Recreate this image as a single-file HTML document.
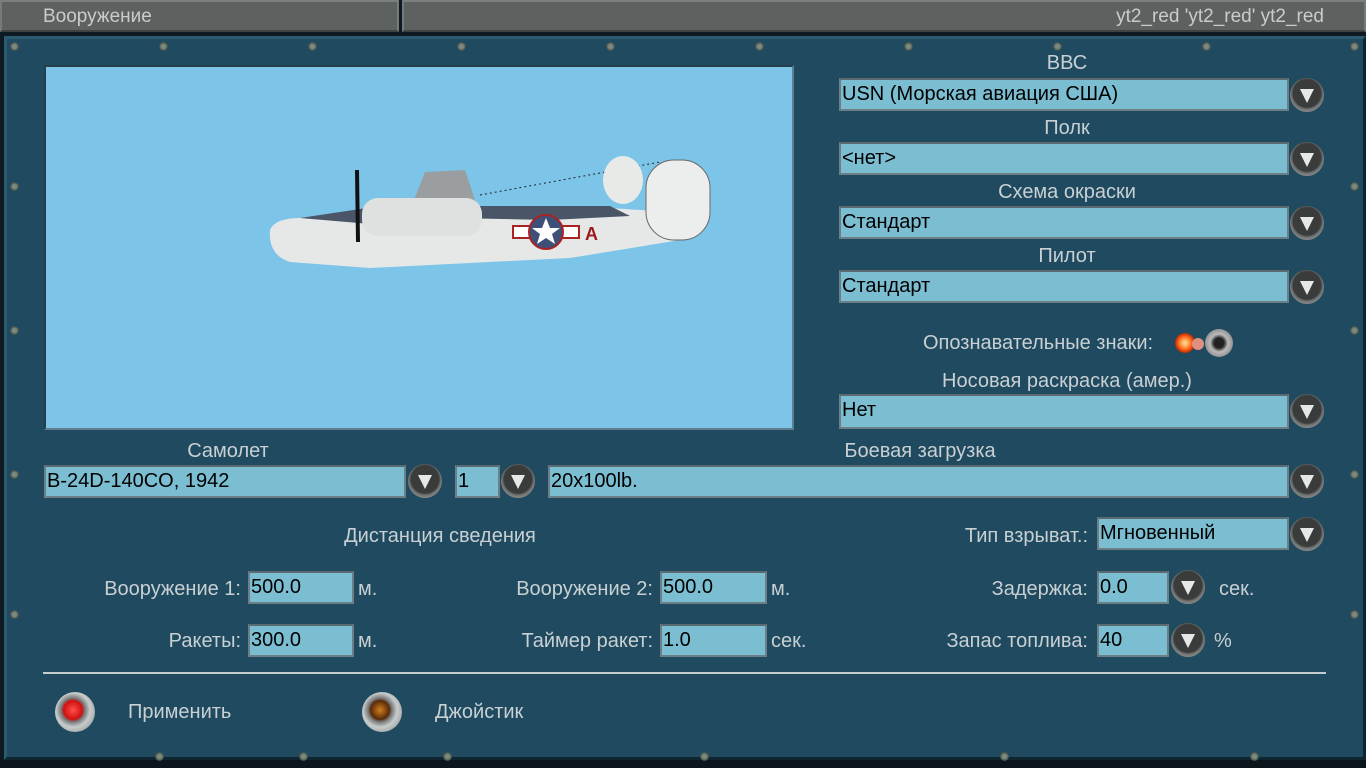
<!DOCTYPE html>
<html><head><meta charset="utf-8"><style>
*{margin:0;padding:0;box-sizing:border-box}
body{width:1366px;height:768px;overflow:hidden;background:#0d1a22;font-family:"Liberation Sans",sans-serif;position:relative}
.a{position:absolute}
.tab{position:absolute;top:0;height:32px;background:#5d615f;border:2px solid #767a78;border-top-color:#7b7f7d;border-bottom-color:#3e4240;color:#c9cccb;font-size:19px;line-height:29px}
.panel{position:absolute;left:4px;top:36px;width:1362px;height:724px;background:#1f4a5f;border:3px solid #2c5a70;border-right-color:#0f2630;border-bottom-color:#0f2630}
.f{position:absolute;background:#7bbdd1;border:2px solid #6d7f86;border-top-color:#5a6a70;color:#000;font-size:20px;line-height:28px;padding-left:1px;white-space:nowrap;overflow:hidden}
.l{position:absolute;color:#c8d0d3;font-size:20px;line-height:20px;white-space:nowrap}
.c{transform:translateX(-50%)}
.r{text-align:right}
.b{position:absolute;width:34px;height:34px;border-radius:50%;background:radial-gradient(circle at 50% 45%,#3a3c3c 55%,#6d706f 62%,#8a8d8c 75%,#4a4c4c 100%)}
.b:after{content:"";position:absolute;left:10px;top:11px;border-left:7px solid transparent;border-right:7px solid transparent;border-top:14px solid #e6e8e8}
.s{position:absolute;width:9px;height:9px;border-radius:50%;background:radial-gradient(circle,#7d8a80 30%,#2e3c34 80%)}
</style></head><body>
<div class="tab" style="left:0;width:399px;padding-left:41px">Вооружение</div>
<div class="tab" style="left:402px;width:964px;text-align:right;padding-right:40px">yt2_red 'yt2_red' yt2_red</div>
<div class="panel"></div>
<div class="a" style="left:0;top:760px;width:1366px;height:8px;background:#0b161c"></div>
<div class="s" style="left:10px;top:42px"></div><div class="s" style="left:159px;top:42px"></div><div class="s" style="left:308px;top:42px"></div><div class="s" style="left:457px;top:42px"></div><div class="s" style="left:606px;top:42px"></div><div class="s" style="left:755px;top:42px"></div><div class="s" style="left:904px;top:42px"></div><div class="s" style="left:1053px;top:42px"></div><div class="s" style="left:1202px;top:42px"></div><div class="s" style="left:1350px;top:42px"></div>
<div class="s" style="left:10px;top:182px"></div><div class="s" style="left:10px;top:326px"></div><div class="s" style="left:10px;top:470px"></div><div class="s" style="left:10px;top:610px"></div>
<div class="s" style="left:1350px;top:182px"></div><div class="s" style="left:1350px;top:326px"></div><div class="s" style="left:1350px;top:470px"></div><div class="s" style="left:1350px;top:610px"></div>
<div class="s" style="left:155px;top:752px"></div><div class="s" style="left:299px;top:752px"></div><div class="s" style="left:443px;top:752px"></div><div class="s" style="left:700px;top:752px"></div><div class="s" style="left:1000px;top:752px"></div><div class="s" style="left:1250px;top:752px"></div>
<div class="a" style="left:44px;top:65px;width:750px;height:365px;background:#7cc5e9;border:2px solid #263f4d;border-right-color:#5f7f8f;border-bottom-color:#5f7f8f"></div>
<svg class="a" style="left:250px;top:150px" width="480" height="130" viewBox="0 0 480 130">
<polygon points="160,60 175,22 215,20 230,65" fill="#9a9ea0"/>
<line x1="230" y1="45" x2="410" y2="12" stroke="#222" stroke-dasharray="2,3"/>
<path d="M20,80 Q25,68 50,68 L130,58 L360,58 L420,62 L430,90 L320,108 L120,118 L40,112 Q18,105 20,80Z" fill="#e6e8e8"/>
<path d="M50,68 L130,56 L360,56 L380,66 L300,70 L200,68 L120,74Z" fill="#4a5668"/>
<rect x="112" y="48" width="120" height="38" rx="16" fill="#dfe1e1"/>
<ellipse cx="373" cy="30" rx="20" ry="24" fill="#e8eae8"/>
<rect x="396" y="10" width="64" height="80" rx="28" fill="#eceeee" stroke="#666"/>
<line x1="107" y1="20" x2="108" y2="92" stroke="#111" stroke-width="4"/>
<rect x="263" y="76" width="66" height="12" fill="#fff" stroke="#a22" stroke-width="2"/>
<circle cx="296" cy="82" r="17" fill="#3e5078" stroke="#a22" stroke-width="2"/>
<polygon points="296,68 300,78 310,78 302,84 305,94 296,88 287,94 290,84 282,78 292,78" fill="#fff"/>
<text x="335" y="90" fill="#a01818" font-size="18" font-weight="bold" font-family="Liberation Sans">A</text>
</svg>
<div class="l c" style="left:1067px;top:53px">ВВС</div>
<div class="f" style="left:839px;top:78px;width:450px;height:33px">USN (Морская авиация США)</div><div class="b" style="left:1290px;top:78px"></div>
<div class="l c" style="left:1067px;top:118px">Полк</div>
<div class="f" style="left:839px;top:142px;width:450px;height:33px">&lt;нет&gt;</div><div class="b" style="left:1290px;top:142px"></div>
<div class="l c" style="left:1067px;top:182px">Схема окраски</div>
<div class="f" style="left:839px;top:206px;width:450px;height:33px">Стандарт</div><div class="b" style="left:1290px;top:206px"></div>
<div class="l c" style="left:1067px;top:246px">Пилот</div>
<div class="f" style="left:839px;top:270px;width:450px;height:33px">Стандарт</div><div class="b" style="left:1290px;top:270px"></div>
<div class="l" style="left:923px;top:333px">Опознавательные знаки:</div>
<div class="a" style="left:1175px;top:333px;width:20px;height:20px;border-radius:50%;background:radial-gradient(circle,#ffd080 10%,#ff6a20 45%,#c02800 70%,transparent 72%)"></div>
<div class="a" style="left:1192px;top:338px;width:12px;height:12px;border-radius:50%;background:#e09080"></div>
<div class="a" style="left:1205px;top:329px;width:28px;height:28px;border-radius:50%;background:radial-gradient(circle,#222 25%,#bbb 45%,#777 90%)"></div>
<div class="l c" style="left:1067px;top:371px">Носовая раскраска (амер.)</div>
<div class="f" style="left:839px;top:394px;width:450px;height:35px">Нет</div><div class="b" style="left:1290px;top:394px"></div>
<div class="l c" style="left:228px;top:441px">Самолет</div>
<div class="l c" style="left:920px;top:441px">Боевая загрузка</div>
<div class="f" style="left:44px;top:465px;width:362px;height:33px">B-24D-140CO, 1942</div><div class="b" style="left:408px;top:464px"></div>
<div class="f" style="left:455px;top:465px;width:45px;height:33px">1</div><div class="b" style="left:501px;top:464px"></div>
<div class="f" style="left:548px;top:465px;width:741px;height:33px">20x100lb.</div><div class="b" style="left:1290px;top:464px"></div>
<div class="l c" style="left:440px;top:526px">Дистанция сведения</div>
<div class="l r" style="left:858px;width:230px;top:526px">Тип взрыват.:</div>
<div class="f" style="left:1097px;top:517px;width:192px;height:33px">Мгновенный</div><div class="b" style="left:1290px;top:517px"></div>
<div class="l r" style="left:10px;width:231px;top:579px">Вооружение 1:</div>
<div class="f" style="left:248px;top:571px;width:106px;height:33px">500.0</div><div class="l" style="left:358px;top:579px">м.</div>
<div class="l r" style="left:423px;width:230px;top:579px">Вооружение 2:</div>
<div class="f" style="left:660px;top:571px;width:107px;height:33px">500.0</div><div class="l" style="left:771px;top:579px">м.</div>
<div class="l r" style="left:858px;width:230px;top:579px">Задержка:</div>
<div class="f" style="left:1097px;top:571px;width:72px;height:33px">0.0</div><div class="b" style="left:1171px;top:570px"></div><div class="l" style="left:1219px;top:579px">сек.</div>
<div class="l r" style="left:10px;width:231px;top:631px">Ракеты:</div>
<div class="f" style="left:248px;top:624px;width:106px;height:33px">300.0</div><div class="l" style="left:358px;top:631px">м.</div>
<div class="l r" style="left:423px;width:230px;top:631px">Таймер ракет:</div>
<div class="f" style="left:660px;top:624px;width:107px;height:33px">1.0</div><div class="l" style="left:771px;top:631px">сек.</div>
<div class="l r" style="left:858px;width:230px;top:631px">Запас топлива:</div>
<div class="f" style="left:1097px;top:624px;width:72px;height:33px">40</div><div class="b" style="left:1171px;top:623px"></div><div class="l" style="left:1214px;top:631px">%</div>
<div class="a" style="left:43px;top:672px;width:1283px;height:2px;background:#c4ccce"></div>
<div class="a" style="left:55px;top:692px;width:40px;height:40px;border-radius:50%;background:radial-gradient(circle at 45% 45%,#ff5050 0,#d01010 30%,#777 38%,#c8cccc 55%,#8a9090 90%)"></div>
<div class="l" style="left:128px;top:702px">Применить</div>
<div class="a" style="left:362px;top:692px;width:40px;height:40px;border-radius:50%;background:radial-gradient(circle at 45% 45%,#d08020 0,#5a2a08 30%,#777 38%,#c8cccc 55%,#8a9090 90%)"></div>
<div class="l" style="left:435px;top:702px">Джойстик</div>
</body></html>
